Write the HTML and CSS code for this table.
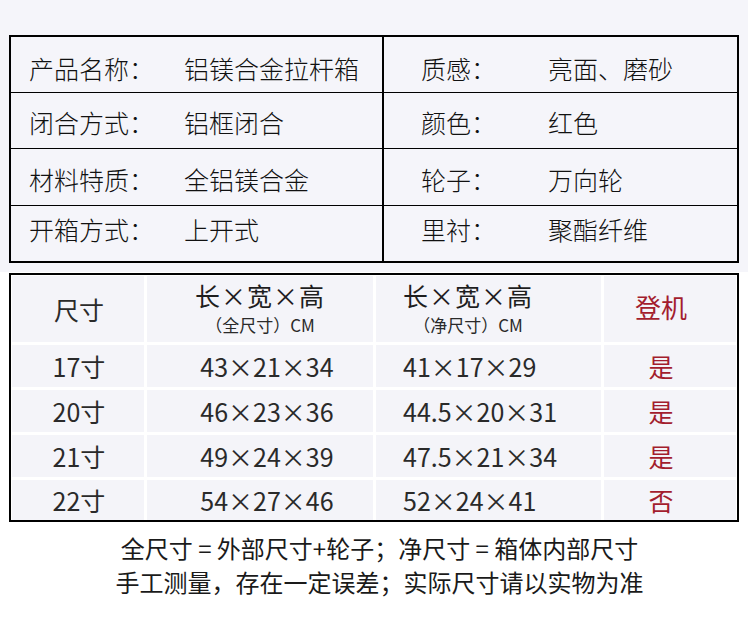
FILE: index.html
```html
<!DOCTYPE html>
<html lang="zh-CN">
<head>
<meta charset="utf-8">
<title>铝镁合金拉杆箱 规格</title>
<link rel="stylesheet" href="styles.css">
</head>
<body>
<div class="top">
  <div class="spec">
    <div class="cell l r1"><span class="k">产品名称：</span><span class="v">铝镁合金拉杆箱</span></div>
    <div class="cell r r1"><span class="k">质感：</span><span class="v">亮面、磨砂</span></div>
    <div class="cell l r2"><span class="k">闭合方式：</span><span class="v">铝框闭合</span></div>
    <div class="cell r r2"><span class="k">颜色：</span><span class="v">红色</span></div>
    <div class="cell l r3"><span class="k">材料特质：</span><span class="v">全铝镁合金</span></div>
    <div class="cell r r3"><span class="k">轮子：</span><span class="v">万向轮</span></div>
    <div class="cell l r4"><span class="k">开箱方式：</span><span class="v">上开式</span></div>
    <div class="cell r r4"><span class="k">里衬：</span><span class="v">聚酯纤维</span></div>
  </div>
</div>
<div class="bottom">
  <div class="sizes">
    <div class="c c1 h"><span class="hd">尺寸</span></div>
    <div class="c c2 h"><div class="hbox"><span class="ht">长×宽×高</span><span class="hs">（全尺寸）CM</span></div></div>
    <div class="c c3 h"><div class="hbox"><span class="ht">长×宽×高</span><span class="hs">（净尺寸）CM</span></div></div>
    <div class="c c4 h"><span class="red hd2">登机</span></div>

    <div class="c c1">17寸</div>
    <div class="c c2">43×21×34</div>
    <div class="c c3">41×17×29</div>
    <div class="c c4"><span class="red">是</span></div>

    <div class="c c1">20寸</div>
    <div class="c c2">46×23×36</div>
    <div class="c c3">44.5×20×31</div>
    <div class="c c4"><span class="red">是</span></div>

    <div class="c c1">21寸</div>
    <div class="c c2">49×24×39</div>
    <div class="c c3">47.5×21×34</div>
    <div class="c c4"><span class="red">是</span></div>

    <div class="c c1">22寸</div>
    <div class="c c2">54×27×46</div>
    <div class="c c3">52×24×41</div>
    <div class="c c4"><span class="red">否</span></div>
  </div>
  <div class="notes">
    <p>全尺寸 = 外部尺寸+轮子；净尺寸 = 箱体内部尺寸</p>
    <p>手工测量，存在一定误差；实际尺寸请以实物为准</p>
  </div>
</div>
</body>
</html>
```
FILE: styles.css
```css
* { box-sizing: border-box; }
html, body { margin: 0; padding: 0; background: #fff; }
body {
  width: 750px;
  height: 621px;
  overflow: hidden;
  font-family: "Noto Sans CJK SC", "Noto Sans", sans-serif;
  color: #1c1c1c;
}

.top {
  width: 748px;
  height: 272px;
  background: #f5f5fa;
  padding: 35px 0 0 9px;
}
.spec {
  width: 730px;
  height: 228px;
  border: 2px solid #000;
  display: grid;
  grid-template-columns: 373px 353px;
  grid-template-rows: 56px 56px 57px 55px;
}
.cell {
  display: flex;
  align-items: center;
  font-size: 25px;
  font-weight: 300;
  line-height: 30px;
  color: #111;
  white-space: nowrap;
}
.cell.l { border-right: 2px solid #000; padding-left: 18px; }
.cell.r { padding-left: 37px; }
.cell.l .k { width: 155px; }
.cell.r .k { width: 127px; }
.r1, .r2, .r3 { border-bottom: 1px solid #000; }
.r1 { padding-top: 7px; }
.r2 { padding-top: 3px; }
.r3 { padding-top: 4px; }
.r4 { padding-bottom: 9px; }

.bottom { padding: 1px 0 0 9px; }
.sizes {
  width: 730px;
  height: 249px;
  border: 2px solid #000;
  padding: 1px;
  display: grid;
  grid-template-columns: 132px 226px 225px 132px;
  grid-template-rows: 66px 42px 42px 42px 40px;
  gap: 3px;
}
.c {
  background: #f4f4f9;
  display: flex;
  align-items: center;
  font-size: 25px;
  line-height: 30px;
  color: #2a2a2a;
  white-space: nowrap;
}
.c1 { justify-content: center; padding-left: 2px; }
.c2 { justify-content: center; padding-left: 14px; }
.c3 { padding-left: 27px; }
.c4 { justify-content: center; padding-right: 18px; }
.c2.h { padding-left: 0; }
.c.h { align-items: flex-start; }
.c1.h, .c4.h { align-items: center; }
.hbox {
  display: flex;
  flex-direction: column;
  align-items: center;
  padding-top: 1px;
}
.ht {
  font-size: 25px;
  line-height: 36px;
  letter-spacing: 1px;
  font-weight: 400;
  color: #1e1e1e;
}
.hs {
  font-size: 17px;
  line-height: 20px;
  margin-top: 2px;
  color: #2a2a2a;
}
.hd { font-size: 25px; }
.red { color: #a31d2e; }
.hd2 { font-size: 26px; padding-bottom: 4px; }

.notes {
  margin-top: 9px;
  text-align: center;
  font-size: 24px;
  line-height: 34px;
  color: #1a1a1a;
}
.notes p { margin: 0; }
```
